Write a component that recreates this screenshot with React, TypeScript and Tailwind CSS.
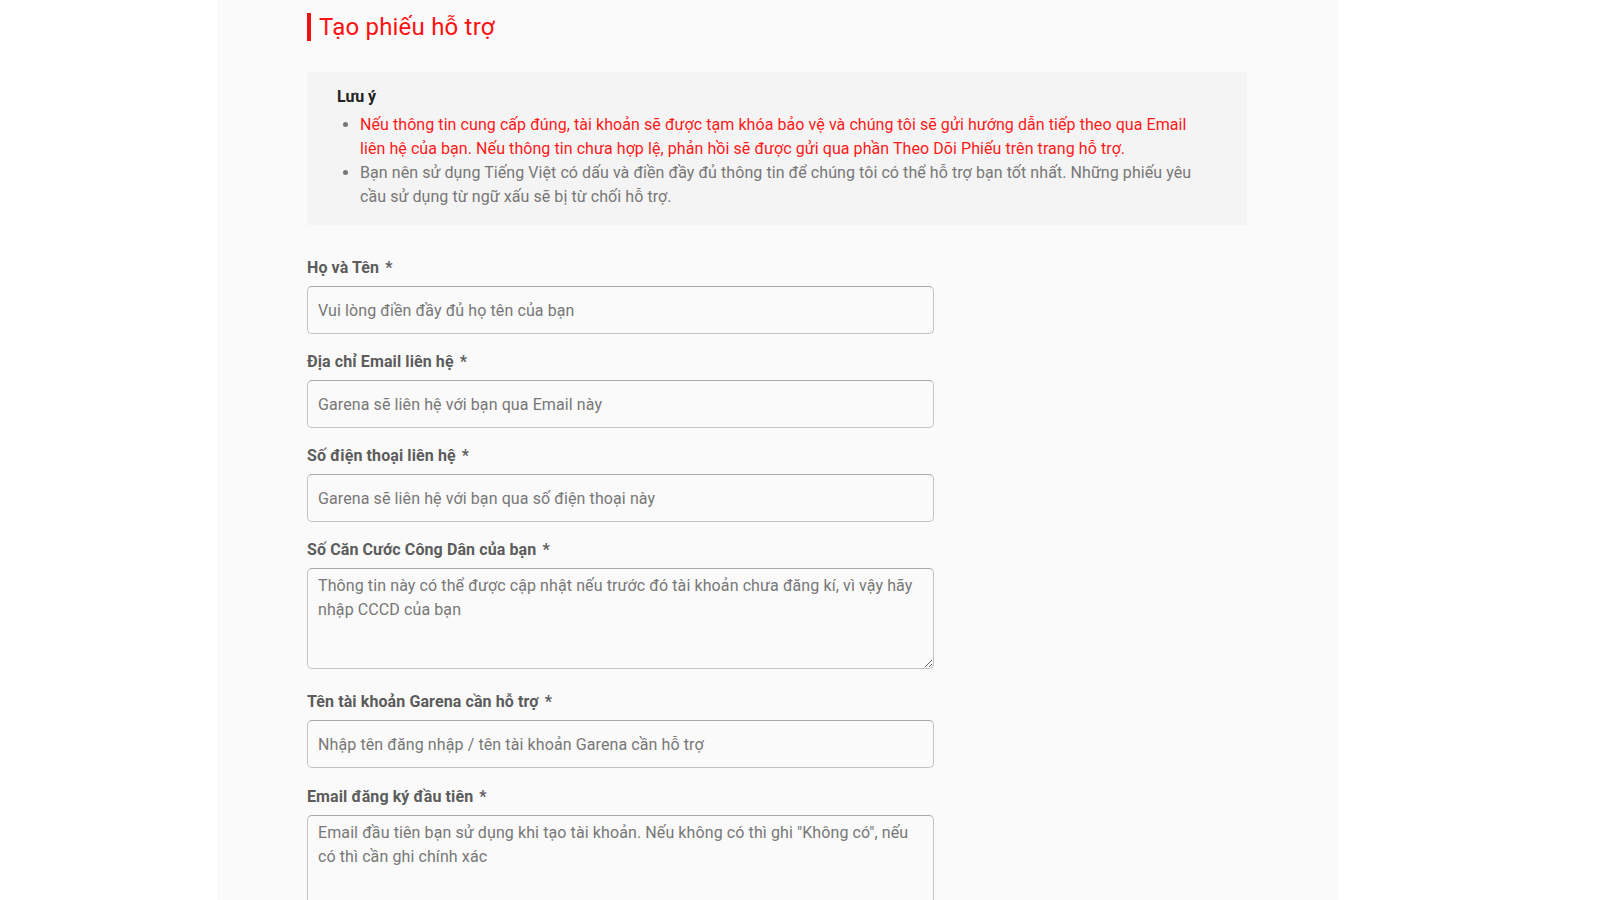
import React from "react";

const font = { fontFamily: "Roboto, 'Noto Sans', Arial, sans-serif" };

function Label({ text }: { text: string }) {
  return (
    <label className="block text-[16px] leading-[24px] font-bold tracking-[0.1px] text-[#5c5c5c] mb-[6px]">
      {text} <span className="ml-[2px]">*</span>
    </label>
  );
}

function Input({ placeholder }: { placeholder: string }) {
  return (
    <input
      type="text"
      placeholder={placeholder}
      className="block w-[627px] h-[48px] px-[10px] rounded-[5px] border border-[#c2c2c2] border-t-[#a9a9a9] bg-[#fafafa] text-[16px] tracking-[0.1px] text-[#333] placeholder:text-[#777] outline-none"
    />
  );
}

function Area({ placeholder, h }: { placeholder: string; h: string }) {
  return (
    <textarea
      placeholder={placeholder}
      className={`block w-[627px] ${h} px-[10px] pt-[5px] rounded-[5px] border border-[#c2c2c2] border-t-[#a9a9a9] bg-[#fafafa] text-[16px] leading-[24px] tracking-[0.1px] text-[#333] placeholder:text-[#777] outline-none`}
    />
  );
}

export default function App() {
  return (
    <div className="min-h-screen bg-white overflow-hidden" style={font}>
      <div className="ml-[217px] w-[1121px] min-h-[900px] bg-[#fafafa] pl-[90px] pt-[13px]">
        <h1 className="h-[28px] border-l-4 border-[#ee1111] pl-[8px] text-[24px] leading-[28px] tracking-[0.2px] text-[#ff1111] font-normal">
          Tạo phiếu hỗ trợ
        </h1>

        <div className="mt-[31px] w-[940px] bg-[#f4f4f4] pt-[13px] pb-[16px] pl-[30px] pr-[40px]">
          <div className="text-[16px] leading-[24px] font-bold text-[#222]">Lưu ý</div>
          <ul className="mt-[4px] list-disc pl-[23px] text-[16px] leading-[24px] tracking-[0.07px] marker:text-[#777]">
            <li className="text-[#ff1a1a]">
              Nếu thông tin cung cấp đúng, tài khoản sẽ được tạm khóa bảo vệ và chúng tôi sẽ gửi hướng dẫn tiếp theo qua Email liên hệ của bạn. Nếu thông tin chưa hợp lệ, phản hồi sẽ được gửi qua phần Theo Dõi Phiếu trên trang hỗ trợ.
            </li>
            <li className="text-[#777]">
              Bạn nên sử dụng Tiếng Việt có dấu và điền đầy đủ thông tin để chúng tôi có thể hỗ trợ bạn tốt nhất. Những phiếu yêu cầu sử dụng từ ngữ xấu sẽ bị từ chối hỗ trợ.
            </li>
          </ul>
        </div>

        <form className="mt-[31px]">
          <div>
            <Label text="Họ và Tên" />
            <Input placeholder="Vui lòng điền đầy đủ họ tên của bạn" />
          </div>
          <div className="mt-[16px]">
            <Label text="Địa chỉ Email liên hệ" />
            <Input placeholder="Garena sẽ liên hệ với bạn qua Email này" />
          </div>
          <div className="mt-[16px]">
            <Label text="Số điện thoại liên hệ" />
            <Input placeholder="Garena sẽ liên hệ với bạn qua số điện thoại này" />
          </div>
          <div className="mt-[16px]">
            <Label text="Số Căn Cước Công Dân của bạn" />
            <Area
              h="h-[101px]"
              placeholder="Thông tin này có thể được cập nhật nếu trước đó tài khoản chưa đăng kí, vì vậy hãy nhập CCCD của bạn"
            />
          </div>
          <div className="mt-[21px]">
            <Label text="Tên tài khoản Garena cần hỗ trợ" />
            <Input placeholder="Nhập tên đăng nhập / tên tài khoản Garena cần hỗ trợ" />
          </div>
          <div className="mt-[17px]">
            <Label text="Email đăng ký đầu tiên" />
            <Area
              h="h-[101px]"
              placeholder={'Email đầu tiên bạn sử dụng khi tạo tài khoản. Nếu không có thì ghi "Không có", nếu có thì cần ghi chính xác'}
            />
          </div>
        </form>
      </div>
    </div>
  );
}
